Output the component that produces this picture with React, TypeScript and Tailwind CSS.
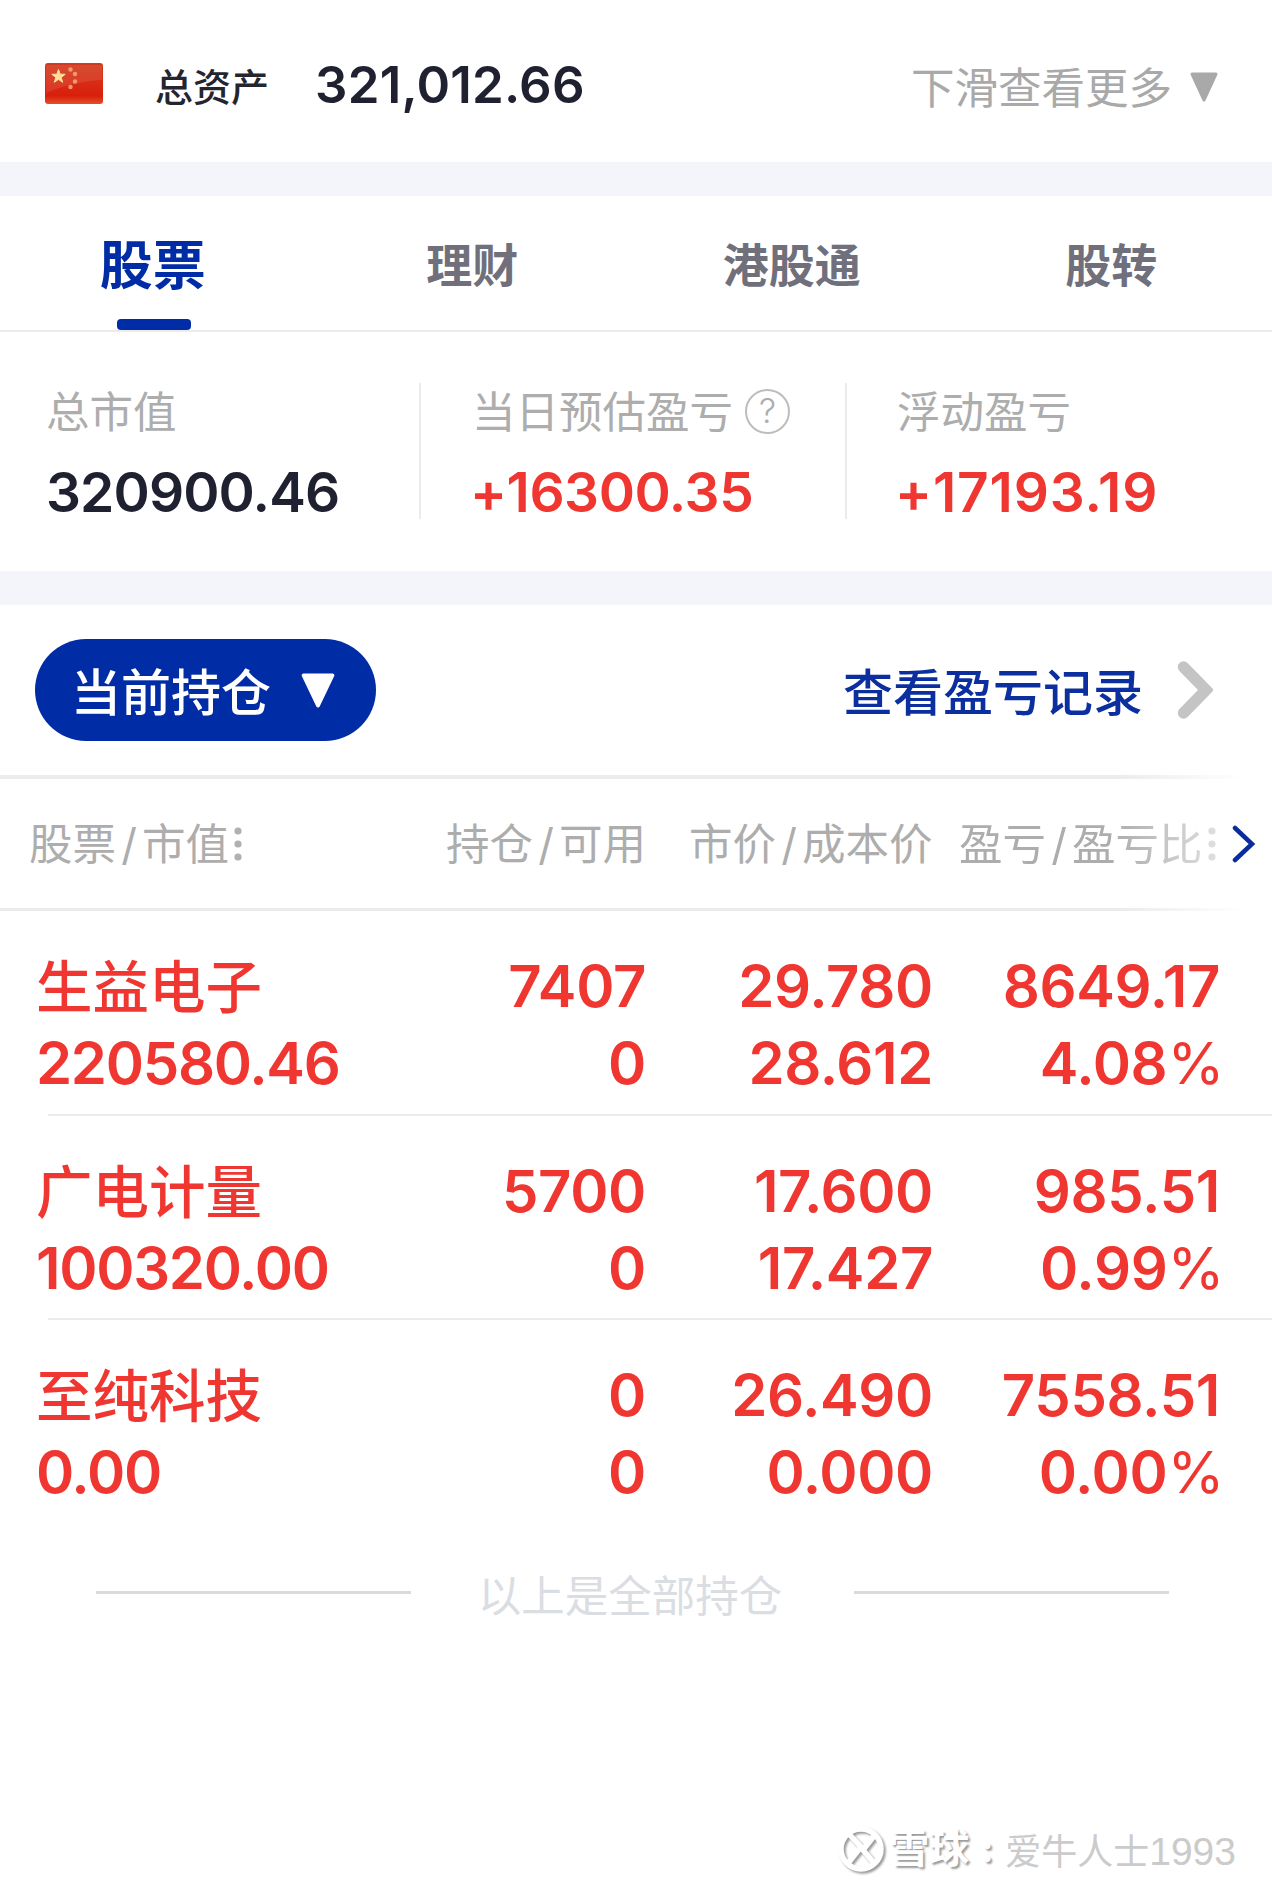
import React from 'react';
import clsx from 'clsx';

interface Holding {
  name: string;
  value: string;
  amount: string;
  available: string;
  price: string;
  cost: string;
  profit: string;
  ratio: string;
}

const tabs = ['股票', '理财', '港股通', '股转'];

const holdings: Holding[] = [
  {
    name: '生益电子',
    value: '220580.46',
    amount: '7407',
    available: '0',
    price: '29.780',
    cost: '28.612',
    profit: '8649.17',
    ratio: '4.08'
  },
  {
    name: '广电计量',
    value: '100320.00',
    amount: '5700',
    available: '0',
    price: '17.600',
    cost: '17.427',
    profit: '985.51',
    ratio: '0.99'
  },
  {
    name: '至纯科技',
    value: '0.00',
    amount: '0',
    available: '0',
    price: '26.490',
    cost: '0.000',
    profit: '7558.51',
    ratio: '0.00'
  }
];

const Flag: React.FC = () => (
  <svg className="w-[58px] h-[41px]" viewBox="0 0 58 41">
    <defs>
      <linearGradient id="flag" x1="0" y1="0" x2="0" y2="1">
        <stop offset="0" stopColor="#d03a1e" />
        <stop offset="0.5" stopColor="#d92a14" />
        <stop offset="0.8" stopColor="#d81f0c" />
        <stop offset="1" stopColor="#e2502c" />
      </linearGradient>
    </defs>
    <rect width="58" height="41" rx="3" fill="url(#flag)" />
    <path d="M1 2h56v15C38 18 20 22 1 30z" fill="#fff" opacity="0.09" />
    <path d="M13.5 6.5l1.7 4.7 5 .1-4 3.1 1.5 4.9-4.2-2.9-4.2 2.9 1.5-4.9-4-3.1 5-.1z" fill="#ffdf9a" stroke="#ffdf9a" />
    <g fill="#f09a6c">
      <circle cx="25.5" cy="6.5" r="2.2" />
      <circle cx="30" cy="11" r="2.2" />
      <circle cx="30" cy="18.5" r="2.2" />
      <circle cx="25.5" cy="24" r="2.2" />
    </g>
  </svg>
);

const Triangle: React.FC<{ className: string }> = ({ className }) => (
  <svg className={className} viewBox="0 0 28 30" preserveAspectRatio="none">
    <path d="M2 2h24L14 28z" fill="currentColor" stroke="currentColor" strokeWidth="3" strokeLinejoin="round" />
  </svg>
);

const SortDots: React.FC = () => (
  <svg className="w-[10px] h-[34px]" viewBox="0 0 10 34" fill="#b0b0b0">
    <circle cx="5" cy="4" r="3.6" />
    <circle cx="5" cy="17" r="3.6" />
    <circle cx="5" cy="30" r="3.6" />
  </svg>
);

const Slash: React.FC = () => <span className="inline-block w-[26px] text-center">/</span>;

const Divider: React.FC = () => <div className="h-[34px] bg-[#f4f5fa]" />;

const App: React.FC = () => {
  return (
    <div className="w-[1272px] h-[1890px] overflow-hidden bg-white font-['Inter','Noto_Sans_CJK_SC',sans-serif] text-[43.5px] leading-none whitespace-nowrap">
      {/* Total assets */}
      <header className="flex items-center h-[162px] pl-[45px] pr-[54px] pt-[5px]">
        <Flag />
        <span className="ml-[52px] pt-[7px] text-[38px] font-medium text-[#24252f]">总资产</span>
        <span className="ml-[46px] pt-[1px] text-[51px] font-[570] tracking-[0.004em] text-[#1f2030]">321,012.66</span>
        <span className="ml-auto pt-[10px] text-[#a9a9a9]">下滑查看更多</span>
        <Triangle className="ml-[18px] mt-[6px] w-[28px] h-[30px] text-[#a9a9a9]" />
      </header>
      <Divider />

      {/* Tabs */}
      <nav className="border-b-2 border-[#ececec] h-[136px]">
        <div className="grid grid-cols-4 w-[1278px] -ml-[7px] h-[134px]">
          {tabs.map((tab, index) => (
            <div
              key={tab}
              className={clsx(
                'flex flex-col items-center font-bold',
                index === 0 ? 'pt-[5px] text-[53px] text-[#002ca6]' : 'pt-[4px] text-[46px] text-[#6f707c]'
              )}
            >
              <span className="h-[118px] leading-[131px]">{tab}</span>
              {index === 0 && <span className="ml-[2px] w-[74px] h-[11px] rounded-[4px] bg-[#002ca6]" />}
            </div>
          ))}
        </div>
      </nav>

      {/* Summary */}
      <section className="flex h-[239px] pt-[51px]">
        <div className="w-[419px] h-[136px] pl-[46px]">
          <div className="h-[56px] leading-[58px] text-[#adadad]">总市值</div>
          <div className="mt-[25px] h-[56px] leading-[56px] text-[55px] font-[570] tracking-[-0.016em] text-[#1f2030]">320900.46</div>
        </div>
        <div className="w-[426px] h-[136px] pl-[51px] border-l-2 border-[#ebebeb]">
          <div className="flex items-center h-[56px] text-[#adadad]">
            <span className="pt-[3px]">当日预估盈亏</span>
            <span className="flex items-center justify-center ml-[12px] w-[45px] h-[45px] rounded-full border-2 border-[#bdbdbd] text-[34px] font-light">?</span>
          </div>
          <div className="mt-[25px] -ml-[2px] h-[56px] leading-[56px] text-[55px] font-[570] tracking-[-0.008em] text-[#f03630]">+16300.35</div>
        </div>
        <div className="h-[136px] pl-[50px] border-l-2 border-[#ebebeb]">
          <div className="h-[56px] leading-[58px] text-[#adadad]">浮动盈亏</div>
          <div className="mt-[25px] -ml-[2px] h-[56px] leading-[56px] text-[55px] font-[570] tracking-[0.016em] text-[#f03630]">+17193.19</div>
        </div>
      </section>
      <Divider />

      {/* Toolbar */}
      <div className="flex items-center h-[170px] pl-[35px] pr-[59px]">
        <button className="flex items-center w-[341px] h-[102px] pl-[36px] rounded-full bg-[#002ca6] text-white text-[50px] font-medium">
          <span className="pt-[6px]">当前持仓</span>
          <Triangle className="ml-[30px] w-[34px] h-[35px]" />
        </button>
        <span className="ml-auto pt-[5px] text-[50px] font-medium text-[#0b2f9f]">查看盈亏记录</span>
        <svg className="ml-[34px] w-[36px] h-[58px]" viewBox="0 0 36 58" fill="none" stroke="#c4c4c4" strokeWidth="11.5" strokeLinecap="round">
          <path d="M6.5 6L29 29L6.5 52" />
        </svg>
      </div>

      {/* Table head */}
      <div className="h-[4px] bg-linear-to-r from-[#ebecee] from-88% to-white to-98%" />
      <div className="flex items-center h-[129px] pl-[29px] text-[#adadad]">
        <div className="flex items-center w-[417px]">
          <span className="pt-[3px]">股票<Slash />市值</span>
          <span className="ml-[4px]"><SortDots /></span>
        </div>
        <div className="w-[243px] pt-[3px]">持仓<Slash />可用</div>
        <div className="w-[270px] pt-[3px]">市价<Slash />成本价</div>
        <div className="flex items-center [mask-image:linear-gradient(to_right,black_60%,rgba(0,0,0,0.4))]">
          <span className="pt-[3px]">盈亏<Slash />盈亏比</span>
          <span className="ml-[4px]"><SortDots /></span>
        </div>
        <svg className="ml-[15px] w-[24px] h-[38px]" viewBox="0 0 24 38" fill="none" stroke="#0a2c9c" strokeWidth="4.5">
          <path d="M3 3L20 19L3 35" strokeLinecap="round" />
        </svg>
      </div>
      <div className="h-[3px] bg-linear-to-r from-[#ebebeb] from-88% to-white to-98%" />

      {/* Holdings */}
      <div className="text-[58px] leading-[77px] font-[570] tracking-[-0.006em] text-[#f03630]">
        {holdings.map((item, index) => (
          <div key={item.name} className="flex flex-col h-[204.5px]">
            <div className="grid grid-cols-[347px_263px_287px_287px] pl-[36px] pt-[37px] h-[203px] text-right">
              <div className="text-left">
                <div className="h-[77px] text-[56.5px] leading-[80px] font-medium tracking-normal">{item.name}</div>
                <div className="tracking-[-0.022em]">{item.value}</div>
              </div>
              <div>
                <div>{item.amount}</div>
                <div>{item.available}</div>
              </div>
              <div>
                <div>{item.price}</div>
                <div>{item.cost}</div>
              </div>
              <div>
                <div>{item.profit}</div>
                <div className="-mr-[4px]">{item.ratio}<span className="font-normal">%</span></div>
              </div>
            </div>
            {index < holdings.length - 1 && <div className="ml-[48px] h-[2px] bg-[#ececec]" />}
          </div>
        ))}
      </div>

      {/* End of list */}
      <div className="flex items-center h-[136px] pl-[96px] text-[#dadde2]">
        <div className="w-[315px] h-[3px] bg-[#d9dadb]" />
        <span className="w-[443px] pt-[8px] pr-[5px] text-center">以上是全部持仓</span>
        <div className="w-[315px] h-[3px] bg-[#d9dadb]" />
      </div>

      {/* Watermark */}
      <footer className="flex items-center justify-end mt-[163px] h-[50px] pr-[36px] text-[36px] text-white">
        <svg className="w-[50px] h-[50px] drop-shadow-[2px_2px_1px_rgba(0,0,0,0.4)]" viewBox="0 0 50 50" fill="none" stroke="#fff" strokeWidth="5.5">
          <circle cx="25" cy="25" r="20" />
          <path d="M12 9L25 23L13 38M38 12L27 26L39 40" />
        </svg>
        <span className="ml-[3px] font-bold text-[40px] text-shadow-[2px_2px_2px_rgba(0,0,0,0.4)]">雪球</span>
        <span className="w-[36px] text-center font-bold text-shadow-[2px_2px_2px_rgba(0,0,0,0.4)]">:</span>
        <span className="pt-[5px] text-[#cbcbcb]">
          爱牛人士<span className="font-['Liberation_Sans',sans-serif] text-[39px]">1993</span>
        </span>
      </footer>
    </div>
  );
};

export default App;
